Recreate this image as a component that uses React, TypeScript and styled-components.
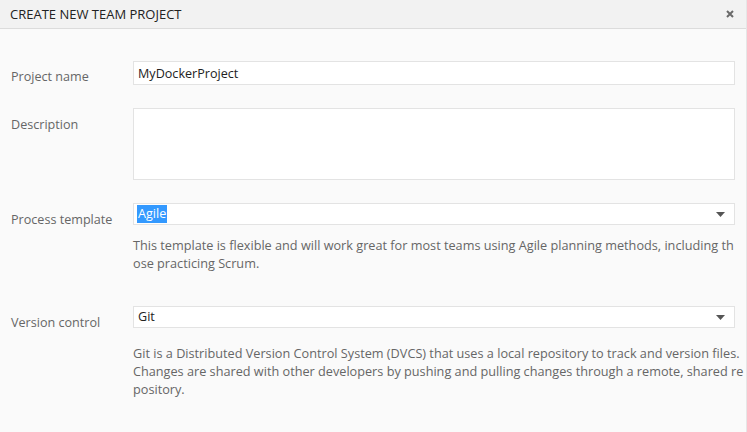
import React from 'react'
import styled, { createGlobalStyle } from 'styled-components'

const Global = createGlobalStyle`
html, body {
  margin: 0;
  padding: 0;
  background: #fafafa;
}
body {
  font-family: 'Open Sans', 'Segoe UI', sans-serif;
  font-size: 12.6px;
  color: #666;
}
`

const Dialog = styled.div`
width: 747px;
height: 432px;
box-sizing: border-box;
background: #fafafa;
border-right: 1px solid #e6e6e6;
display: flex;
flex-direction: column;
`

const Header = styled.div`
height: 29px;
box-sizing: border-box;
background: #f2f2f2;
border-bottom: 1px solid #dcdcdc;
display: flex;
align-items: center;
justify-content: space-between;
padding: 0 12px 0 10px;
`

const Title = styled.div`
font-size: 13px;
color: #222;
`

const Close = styled.button`
border: none;
background: none;
padding: 0;
width: 8px;
height: 8px;
display: flex;
cursor: pointer;
`

const Body = styled.div`
padding: 32px 11px 0 11px;
display: flex;
flex-direction: column;
`

const Row = styled.div<{ $gap: number }>`
display: grid;
grid-template-columns: 122px 602px;
margin-bottom: ${p => p.$gap}px;
`

const Label = styled.label<{ $top: number }>`
padding-top: ${p => p.$top}px;
font-size: 12.6px;
color: #666;
line-height: 16px;
`

const Field = styled.div`
display: flex;
flex-direction: column;
`

const TextBox = styled.div`
height: 24px;
box-sizing: border-box;
border: 1px solid #e3e3e3;
background: #fff;
padding: 0 4px;
display: flex;
align-items: center;
font-size: 12.6px;
color: #222;
`

const TextArea = styled.div`
height: 72px;
box-sizing: border-box;
border: 1px solid #e3e3e3;
background: #fff;
`

const Select = styled.div`
height: 22px;
box-sizing: border-box;
border: 1px solid #e3e3e3;
background: #fff;
padding: 0 9px 0 3px;
display: flex;
align-items: center;
justify-content: space-between;
font-size: 12.6px;
color: #222;
`

const Selected = styled.span`
background: #3399ff;
color: #fff;
padding: 0 1px;
line-height: 18px;
`

const Plain = styled.span`
padding: 0 1px;
line-height: 18px;
`

const Help = styled.div<{ $top: number }>`
margin-top: ${p => p.$top}px;
font-size: 12.7px;
line-height: 18px;
color: #666;
white-space: nowrap;
`

const Arrow = () => (
  <svg width="9" height="5" viewBox="0 0 9 5">
    <path d="M0 0 H9 L4.5 5 Z" fill="#555" />
  </svg>
)

export default function App() {
  return (
    <Dialog>
      <Global />
      <Header>
        <Title>CREATE NEW TEAM PROJECT</Title>
        <Close aria-label="close">
          <svg width="8" height="8" viewBox="0 0 8 8">
            <path d="M1 1 L7 7 M7 1 L1 7" stroke="#6a6a6a" strokeWidth="2" />
          </svg>
        </Close>
      </Header>
      <Body>
        <Row $gap={23}>
          <Label $top={8}>Project name</Label>
          <TextBox>MyDockerProject</TextBox>
        </Row>
        <Row $gap={23}>
          <Label $top={9}>Description</Label>
          <TextArea />
        </Row>
        <Row $gap={34}>
          <Label $top={9}>Process template</Label>
          <Field>
            <Select>
              <Selected>Agile</Selected>
              <Arrow />
            </Select>
            <Help $top={11}>
              This template is flexible and will work great for most teams using Agile planning methods, including th<br />
              ose practicing Scrum.
            </Help>
          </Field>
        </Row>
        <Row $gap={0}>
          <Label $top={9}>Version control</Label>
          <Field>
            <Select>
              <Plain>Git</Plain>
              <Arrow />
            </Select>
            <Help $top={16}>
              Git is a Distributed Version Control System (DVCS) that uses a local repository to track and version files.<br />
              Changes are shared with other developers by pushing and pulling changes through a remote, shared re<br />
              pository.
            </Help>
          </Field>
        </Row>
      </Body>
    </Dialog>
  )
}
